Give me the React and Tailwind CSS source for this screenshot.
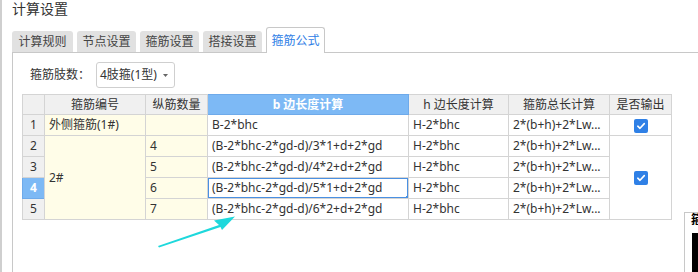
import React from "react";

const font = { fontFamily: '"Noto Sans", "Noto Sans CJK SC", sans-serif' };

const tabs = [
  { label: "计算规则", w: "w-[61px]" },
  { label: "节点设置", w: "w-[59px]" },
  { label: "箍筋设置", w: "w-[59px]" },
  { label: "搭接设置", w: "w-[59px]" },
  { label: "箍筋公式", w: "w-[59px]", active: true },
];

const rows = [
  { n: 2, count: "4", b: "(B-2*bhc-2*gd-d)/3*1+d+2*gd" },
  { n: 3, count: "5", b: "(B-2*bhc-2*gd-d)/4*2+d+2*gd" },
  { n: 4, count: "6", b: "(B-2*bhc-2*gd-d)/5*1+d+2*gd", selected: true },
  { n: 5, count: "7", b: "(B-2*bhc-2*gd-d)/6*2+d+2*gd" },
];

function Check() {
  return (
    <span className="inline-flex w-[14px] h-[14px] rounded-[2px] bg-[#2f80e6] items-center justify-center align-middle">
      <svg width="10" height="10" viewBox="0 0 10 10">
        <path d="M1.8 5.2 L4 7.3 L8.3 2.6" fill="none" stroke="#fff" strokeWidth="1.6" strokeLinecap="round" strokeLinejoin="round" />
      </svg>
    </span>
  );
}

const cell = "border border-[#d4d4d4] px-[4px] text-[#333] whitespace-nowrap overflow-hidden";
const numCell = "border border-[#d4d4d4] bg-[#f0f0f0] text-center text-[#333]";
const yellow = "bg-[#fffde8]";

export default function App() {
  return (
    <div className="relative w-[698px] h-[272px] overflow-hidden bg-white border-l-2 border-[#cfcfcf]" style={font}>
      <div className="pt-px pl-[10px] h-[17px] leading-[16px] text-[14px] text-[#333]">计算设置</div>

      <div className="relative z-10 mt-[10px] ml-[10px] flex items-end gap-[4px] h-[26px]">
        {tabs.map((t) =>
          t.active ? (
            <div
              key={t.label}
              className={`${t.w} h-[26px] bg-white border border-b-0 border-[#c8c8c8] rounded-t-[3px] flex items-center justify-center text-[12px] text-[#2f80e6]`}
            >
              {t.label}
            </div>
          ) : (
            <div
              key={t.label}
              className={`${t.w} h-[21px] mb-px bg-[#e1e1e1] rounded-t-[3px] flex items-center justify-center text-[12px] text-[#444]`}
            >
              {t.label}
            </div>
          )
        )}
      </div>

      <div className="-mt-px ml-[10px] h-[230px] border-t border-l border-[#c8c8c8]">
        <div className="pt-[9px] pl-[17px] flex items-center">
          <span className="w-[66px] text-[12px] text-[#333]">箍筋肢数：</span>
          <div className="w-[79px] h-[26px] border border-[#cfcfcf] rounded-[3px] flex items-center justify-between pl-[3px] pr-[6px] text-[12px] text-[#333]">
            <span>4肢箍(1型)</span>
            <svg width="5" height="3" viewBox="0 0 5 3">
              <path d="M0 0 H5 L2.5 3 Z" fill="#666" />
            </svg>
          </div>
        </div>

        <table className="mt-[6px] ml-[9px] w-[649px] table-fixed border-collapse text-[12px]">
          <colgroup>
            <col className="w-[22px]" />
            <col className="w-[101px]" />
            <col className="w-[62px]" />
            <col className="w-[201px]" />
            <col className="w-[100px]" />
            <col className="w-[101px]" />
            <col className="w-[62px]" />
          </colgroup>
          <thead>
            <tr className="h-[20px]">
              <th className={numCell}></th>
              <th className={`${cell} bg-[#f0f0f0] font-normal text-center`}>箍筋编号</th>
              <th className={`${cell} bg-[#f0f0f0] font-normal text-center`}>纵筋数量</th>
              <th className="border border-[#6eaaea] bg-[#7db9f5] text-white font-bold text-center">b 边长度计算</th>
              <th className={`${cell} bg-[#f0f0f0] font-normal text-center`}>h 边长度计算</th>
              <th className={`${cell} bg-[#f0f0f0] font-normal text-center`}>箍筋总长计算</th>
              <th className={`${cell} bg-[#f0f0f0] font-normal text-center`}>是否输出</th>
            </tr>
          </thead>
          <tbody>
            <tr className="h-[21px]">
              <td className={numCell}>1</td>
              <td className={`${cell} ${yellow}`}>外侧箍筋(1#)</td>
              <td className={`${cell} ${yellow}`}></td>
              <td className={cell}>B-2*bhc</td>
              <td className={cell}>H-2*bhc</td>
              <td className={cell}>2*(b+h)+2*Lw...</td>
              <td className={`${cell} text-center`}>
                <Check />
              </td>
            </tr>
            {rows.map((r, i) => (
              <tr key={r.n} className="h-[21px]">
                <td
                  className={
                    r.selected
                      ? "border border-[#6eaaea] bg-[#7db9f5] text-center text-white font-bold"
                      : numCell
                  }
                >
                  {r.n}
                </td>
                {i === 0 && (
                  <td rowSpan={4} className={`${cell} ${yellow} align-middle`}>
                    2#
                  </td>
                )}
                <td className={`${cell} ${yellow}`}>{r.count}</td>
                <td className={`${cell} relative`}>
                  {r.b}
                  {r.selected && (
                    <>
                      <div className="absolute -inset-px border-2 border-[#4a90e2] pointer-events-none" />
                      <div className="absolute -right-[3px] -bottom-[3px] w-[5px] h-[5px] bg-[#4a90e2]" />
                    </>
                  )}
                </td>
                <td className={cell}>H-2*bhc</td>
                <td className={cell}>2*(b+h)+2*Lw...</td>
                {i === 0 && (
                  <td rowSpan={4} className={`${cell} text-center align-middle`}>
                    <Check />
                  </td>
                )}
              </tr>
            ))}
          </tbody>
        </table>
      </div>

      {/* corner of another window */}
      <div className="absolute left-[682px] top-[212px] w-[30px] h-[70px] bg-white border-l border-t border-[#c8c8c8]">
        <div className="pl-[6px] text-[12px] leading-[14px] font-bold text-black">箍</div>
        <div className="ml-[7px] mt-[6px] w-[20px] h-[50px] bg-black" />
      </div>

      {/* annotation arrow */}
      <svg className="absolute left-0 top-0 pointer-events-none" width="698" height="272">
        <polygon points="156,246 217,225 212,220.5 233,216.5 220,230 218.5,227 157,247.5" fill="#1ed8dc" />
      </svg>
    </div>
  );
}
